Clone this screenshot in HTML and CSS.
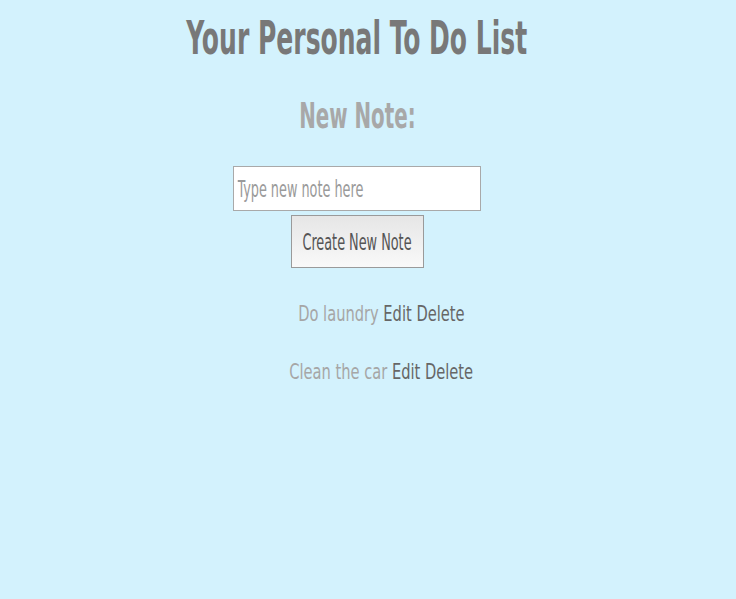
FILE: index.html
```html
<!DOCTYPE html>
<html>
<head>
<meta charset="utf-8">
<link rel="stylesheet" href="styles.css">
</head>
<body>
<main class="page">
  <h1 class="title"><span class="narrow title-text">Your Personal To Do List</span></h1>
  <h2 class="subtitle"><span class="narrow sub-text">New Note:</span></h2>
  <form class="new-note">
    <div class="input-box">
      <input class="note-input" type="text" placeholder="Type new note here">
    </div>
    <button class="create-btn" type="button"><span class="narrow btn-text">Create New Note</span></button>
  </form>
  <ul class="notes">
    <li class="note"><span class="narrow note-line"><span class="note-text">Do laundry</span> <a class="action">Edit</a> <a class="action">Delete</a></span></li>
    <li class="note"><span class="narrow note-line"><span class="note-text">Clean the car</span> <a class="action">Edit</a> <a class="action">Delete</a></span></li>
  </ul>
</main>
</body>
</html>
```

FILE: styles.css
```css
html, body {
  margin: 0;
  padding: 0;
  background: #d3f2fd;
}
body {
  font-family: "DejaVu Sans Condensed", "DejaVu Sans", sans-serif;
}
.page {
  width: 714px;
  text-align: center;
}
.narrow {
  display: inline-block;
  white-space: nowrap;
}
.title {
  margin: 0;
  padding-top: 12px;
  font-size: 46px;
  font-weight: bold;
  color: #787878;
  line-height: 52px;
}
.title-text {
  transform: scaleX(0.605);
}
.subtitle {
  margin: 32px 0 0;
  font-size: 35px;
  font-weight: bold;
  color: #a8a8a8;
  line-height: 40px;
}
.sub-text {
  transform: scaleX(0.63);
}
.new-note {
  margin-top: 30px;
  display: flex;
  flex-direction: column;
  align-items: center;
  gap: 4px;
}
.input-box {
  box-sizing: border-box;
  width: 248px;
  height: 45px;
  border: 1px solid #a9a9a9;
  background: #fff;
  display: flex;
  justify-content: center;
  align-items: stretch;
  overflow: hidden;
}
.note-input {
  box-sizing: border-box;
  flex: 0 0 auto;
  width: 395px;
  border: 0;
  outline: none;
  background: transparent;
  padding: 0 0 0 4px;
  margin: 0;
  font-family: inherit;
  font-size: 23px;
  color: #888;
  transform: scaleX(0.62);
}
.note-input::placeholder {
  color: #9a9a9a;
}
.create-btn {
  box-sizing: border-box;
  width: 133px;
  height: 53px;
  border: 1px solid #9a9a9a;
  background: linear-gradient(#e6e6e6, #f9f9f9);
  font-family: inherit;
  font-size: 23px;
  color: #555;
  padding: 0;
  display: flex;
  justify-content: center;
  align-items: center;
}
.btn-text {
  flex: 0 0 auto;
  transform: scaleX(0.62);
}
.notes {
  list-style: none;
  margin: 31px 0 0;
  padding-left: 48px;
}
.note {
  font-size: 22px;
  line-height: 30px;
  margin-bottom: 28px;
}
.note-line {
  transform: scaleX(0.74);
}
.note-text {
  color: #a6a6a6;
}
.action {
  color: #666;
}
```
